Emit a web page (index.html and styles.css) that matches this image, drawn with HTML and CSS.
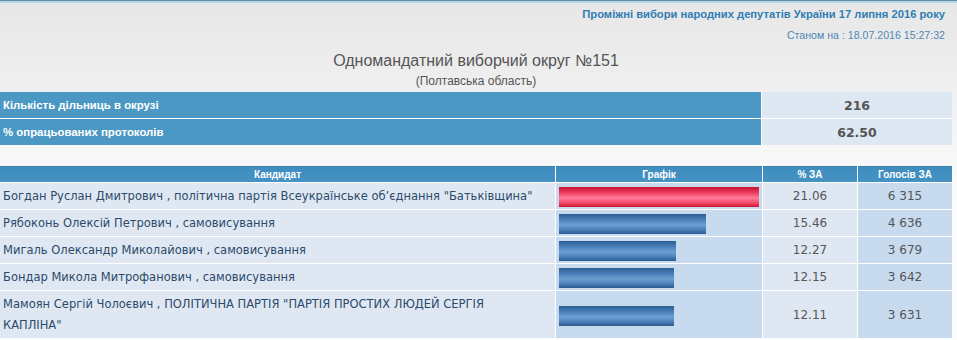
FILE: index.html
```html
<!DOCTYPE html>
<html lang="uk">
<head>
<meta charset="utf-8">
<title>Одномандатний виборчий округ №151</title>
<link rel="stylesheet" href="styles.css">
</head>
<body>
<div class="topline"></div>
<div class="page">
  <div class="meta">
    <div class="election">Проміжні вибори народних депутатів України 17 липня 2016 року</div>
    <div class="stamp">Станом на : 18.07.2016 15:27:32</div>
  </div>
  <div class="heading">
    <div class="district">Одномандатний виборчий округ №151</div>
    <div class="region">(Полтавська область)</div>
  </div>
  <table class="info">
    <tr><td class="info-label">Кількість дільниць в окрузі</td><td class="info-value">216</td></tr>
    <tr><td class="info-label">% опрацьованих протоколів</td><td class="info-value">62.50</td></tr>
  </table>
  <table class="results">
    <thead>
      <tr><th class="c-name">Кандидат</th><th class="c-graph">Графік</th><th class="c-pct">% ЗА</th><th class="c-votes">Голосів ЗА</th></tr>
    </thead>
    <tbody>
      <tr><td class="c-name">Богдан Руслан Дмитрович , політична партія Всеукраїнське об’єднання "Батьківщина"</td><td class="c-graph"><div class="bar bar-red" style="width:200px"></div></td><td class="c-pct">21.06</td><td class="c-votes">6 315</td></tr>
      <tr><td class="c-name">Рябоконь Олексій Петрович , самовисування</td><td class="c-graph"><div class="bar" style="width:147px"></div></td><td class="c-pct">15.46</td><td class="c-votes">4 636</td></tr>
      <tr><td class="c-name">Мигаль Олександр Миколайович , самовисування</td><td class="c-graph"><div class="bar" style="width:117px"></div></td><td class="c-pct">12.27</td><td class="c-votes">3 679</td></tr>
      <tr><td class="c-name">Бондар Микола Митрофанович , самовисування</td><td class="c-graph"><div class="bar" style="width:115px"></div></td><td class="c-pct">12.15</td><td class="c-votes">3 642</td></tr>
      <tr><td class="c-name tall">Мамоян Сергій Чолоєвич , ПОЛІТИЧНА ПАРТІЯ "ПАРТІЯ ПРОСТИХ ЛЮДЕЙ СЕРГІЯ<br>КАПЛІНА"</td><td class="c-graph"><div class="bar" style="width:115px"></div></td><td class="c-pct">12.11</td><td class="c-votes">3 631</td></tr>
    </tbody>
  </table>
</div>
</body>
</html>
```
FILE: styles.css
```css
html, body {
  margin: 0;
  padding: 0;
}
body {
  background: linear-gradient(#e7e7e7 0px, #ececec 60px, #f6f6f6 140px, #fbfbfb 200px);
  font-family: "DejaVu Sans", "Liberation Sans", sans-serif;
  min-height: 340px;
}
.topline {
  height: 1px;
  background: #6a8ea6;
  border-bottom: 2px solid #b4d6ec;
}
.page {
  width: 952px;
}
.meta {
  text-align: right;
  padding-right: 7px;
  font-family: "Liberation Sans", Arial, sans-serif;
}
.election {
  font-weight: bold;
  font-size: 11.2px;
  color: #2f7db3;
  padding-top: 4px;
  line-height: 14px;
}
.stamp {
  font-size: 10.6px;
  color: #4f86b4;
  margin-top: 7px;
  line-height: 14px;
}
.heading {
  text-align: center;
  font-family: "Liberation Sans", Arial, sans-serif;
  color: #555;
  margin-top: 9px;
}
.district {
  font-size: 16px;
  line-height: 20px;
}
.region {
  font-size: 12px;
  line-height: 16px;
  margin-top: 2px;
}
table {
  border-collapse: separate;
  border-spacing: 0;
  width: 952px;
}
.info {
  margin-top: 3px;
}
.info td {
  height: 26px;
  padding: 0;
  border-bottom: 1px solid #fff;
}
.info tr:last-child td {
  border-bottom: none;
}
.info-label {
  background: #4a98c3;
  color: #fff;
  font-family: "Liberation Sans", Arial, sans-serif;
  font-weight: bold;
  font-size: 11.4px;
  padding-left: 3px !important;
  border-right: 1px solid #fff;
}
.info-value {
  width: 190px;
  background: #dde8f2;
  color: #555;
  text-align: center;
  font-weight: bold;
  font-size: 12.5px;
}
.results {
  margin-top: 21px;
}
.results th {
  height: 16px;
  padding: 0;
  background: linear-gradient(#2f6f97 0px, #3f8dbf 1px, #4593c3 16px);
  color: #fff;
  font-family: "Liberation Sans", Arial, sans-serif;
  font-weight: bold;
  font-size: 10px;
  border-right: 1px solid #fff;
  border-bottom: 1px solid #fff;
}
.results td {
  height: 26px;
  padding: 0;
  border-right: 1px solid #fff;
  border-bottom: 1px solid #fff;
  font-size: 11.5px;
}
.results th:last-child, .results td:last-child {
  border-right: none;
}
.results td.c-name {
  background: #dfe8f2;
  color: #2c4a6b;
  padding: 0 3px;
  line-height: 20px;
  text-align: left;
}
.results td.c-name.tall {
  padding: 3px 3px 2px;
  line-height: 21px;
}
.results td.c-graph {
  background: #c8daee;
  padding: 0 3px;
}
.results td.c-pct {
  background: #dfe8f2;
  color: #555;
  text-align: center;
  font-size: 12px;
}
.results td.c-votes {
  background: #c8daee;
  color: #555;
  text-align: center;
  font-size: 12px;
}
th.c-name { width: 555px; }
th.c-graph { width: 205px; }
th.c-pct { width: 94px; }
th.c-votes { width: 94px; }
.bar {
  height: 20px;
  margin-top: 2px;
  background: linear-gradient(#2c5d95 0%, #4c80ba 30%, #6e9fd3 55%, #4a7db6 80%, #2b5a91 100%);
}
.bar-red {
  background: linear-gradient(#c8102f 0%, #f04062 30%, #ff7e97 55%, #f2476a 80%, #cf1435 100%);
}
```
